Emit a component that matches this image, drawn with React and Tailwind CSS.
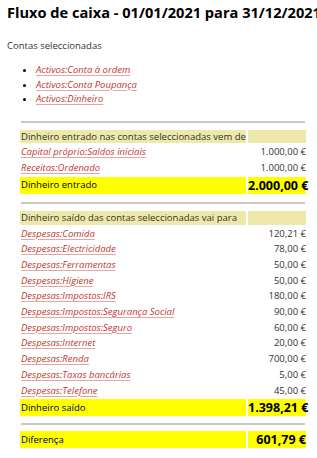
const entradas = [
  { name: 'Capital próprio:Saldos iniciais', value: '1.000,00 €' },
  { name: 'Receitas:Ordenado', value: '1.000,00 €' },
];

const saidas = [
  { name: 'Despesas:Comida', value: '120,21 €' },
  { name: 'Despesas:Electricidade', value: '78,00 €' },
  { name: 'Despesas:Ferramentas', value: '50,00 €' },
  { name: 'Despesas:Higiene', value: '50,00 €' },
  { name: 'Despesas:Impostos:IRS', value: '180,00 €' },
  { name: 'Despesas:Impostos:Segurança Social', value: '90,00 €' },
  { name: 'Despesas:Impostos:Seguro', value: '60,00 €' },
  { name: 'Despesas:Internet', value: '20,00 €' },
  { name: 'Despesas:Renda', value: '700,00 €' },
  { name: 'Despesas:Taxas bancárias', value: '5,00 €' },
  { name: 'Despesas:Telefone', value: '45,00 €' },
];

const linkClass = 'italic text-[#c0392b] underline decoration-[#e8a5a5] underline-offset-2';

const Section = ({ title, rows, totalLabel, total }) => (
  <table className="ml-[18px] w-[290px] table-fixed border-separate border-spacing-[2px]">
    <colgroup>
      <col className="w-[226px]" />
      <col className="w-[58px]" />
    </colgroup>
    <tbody>
      <tr className="bg-[#eee8aa] h-[13.8px] leading-[13.8px]">
        <td className="px-[1px] whitespace-nowrap">{title}</td>
        <td></td>
      </tr>
      {rows.map((row) => (
        <tr key={row.name} className="h-[13.7px] leading-[13.7px]">
          <td className="px-[1px] whitespace-nowrap">
            <a href="#" className={linkClass}>{row.name}</a>
          </td>
          <td className="text-right whitespace-nowrap">{row.value}</td>
        </tr>
      ))}
      <tr className="bg-[#ffff00] h-[17px]">
        <td className="px-[1px] leading-[14px] text-black">{totalLabel}</td>
        <td className="text-right text-[12.5px] leading-[17px] font-bold text-black whitespace-nowrap">{total}</td>
      </tr>
    </tbody>
  </table>
);

const Rule = () => <div className="ml-[21px] w-[284px] h-[2px] bg-[#c8c8c8]" />;

export default function App() {
  return (
    <div className="w-[317px] h-[458px] overflow-hidden bg-white text-[9.5px] text-[#333] font-['Open_Sans',sans-serif]">
      <h1 className="pl-[7px] pt-[2px] text-[14.6px] leading-[20px] font-bold text-black whitespace-nowrap">
        Fluxo de caixa - 01/01/2021 para 31/12/2021
      </h1>

      <p className="pl-[7px] mt-[17px] leading-[14px]">Contas seleccionadas</p>

      <ul className="mt-[10px] pl-[36px] list-disc leading-[14.5px] marker:text-black">
        <li><a href="#" className={linkClass}>Activos:Conta à ordem</a></li>
        <li><a href="#" className={linkClass}>Activos:Conta Poupança</a></li>
        <li><a href="#" className={linkClass}>Activos:Dinheiro</a></li>
      </ul>

      <div className="mt-[14px]">
        <Rule />
      </div>

      <div className="mt-[5px]">
        <Section
          title="Dinheiro entrado nas contas seleccionadas vem de"
          rows={entradas}
          totalLabel="Dinheiro entrado"
          total="2.000,00 €"
        />
      </div>

      <div className="mt-[6px]">
        <Rule />
      </div>

      <div className="mt-[5px]">
        <Section
          title="Dinheiro saído das contas seleccionadas vai para"
          rows={saidas}
          totalLabel="Dinheiro saído"
          total="1.398,21 €"
        />
      </div>

      <div className="mt-[5px]">
        <Rule />
      </div>

      <table className="mt-[4px] ml-[18px] w-[290px] table-fixed border-separate border-spacing-[2px]">
        <colgroup>
          <col className="w-[226px]" />
          <col className="w-[58px]" />
        </colgroup>
        <tbody>
          <tr className="bg-[#ffff00] h-[17px]">
            <td className="px-[1px] leading-[14px] text-black">Diferença</td>
            <td className="text-right text-[12.5px] leading-[17px] font-bold text-black whitespace-nowrap">601,79 €</td>
          </tr>
        </tbody>
      </table>
    </div>
  );
}
